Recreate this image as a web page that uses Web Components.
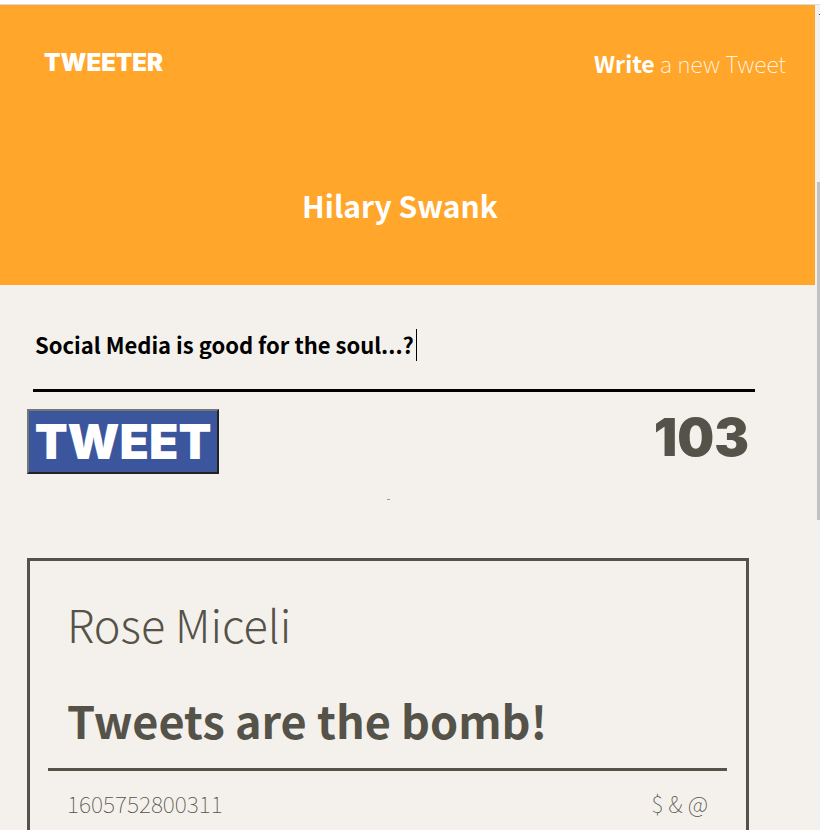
<!DOCTYPE html>
<html lang="en">
<head>
<meta charset="utf-8">
<meta name="viewport" content="width=device-width, initial-scale=1">
<title>Tweeter</title>
<style>
  body {
    margin: 0;
    --ink: #555249;
    --paper: #f4f1ec;
    --orange: #ffa62b;
    --display: Inter, "Liberation Sans", sans-serif;
    font-family: "Noto Sans CJK JP", "Noto Sans CJK SC", "Open Sans", sans-serif;
    color: var(--ink);
    background: var(--paper);
  }
</style>
</head>
<body>
<tweeter-app>
  <tweeter-header slot="header" user="Hilary Swank"></tweeter-header>
  <tweet-form value="Social Media is good for the soul...?" limit="140"></tweet-form>
  <tweet-card>
    <span slot="author">Rose Miceli</span>
    <span slot="text">Tweets are the bomb!</span>
    <span slot="time">1605752800311</span>
    <span slot="actions">$ &amp; @</span>
  </tweet-card>
</tweeter-app>
<script>
const attach = (el, html) => {
  const t = document.createElement('template');
  t.innerHTML = html;
  el.attachShadow({ mode: 'open' }).append(t.content.cloneNode(true));
  return el.shadowRoot;
};

customElements.define('tweeter-app', class extends HTMLElement {
  constructor() {
    super();
    attach(this, `
      <style>
        :host { display: flex; flex-direction: column; height: 100vh; overflow: hidden; }
        .edge { flex: none; height: 4px; background: #fff; border-bottom: 1px solid #dadbde; }
        .view { flex: 1; min-height: 0; display: grid; grid-template-columns: 1fr 5px; }
        .page { min-width: 0; overflow: hidden; }
        main { padding: 32px 66px 32px 27px; }
      </style>
      <div class="edge"></div>
      <div class="view">
        <div class="page">
          <slot name="header"></slot>
          <main><slot></slot></main>
        </div>
        <scroll-rail></scroll-rail>
      </div>`);
  }
});

customElements.define('scroll-rail', class extends HTMLElement {
  constructor() {
    super();
    attach(this, `
      <style>
        :host { display: flex; flex-direction: column; align-items: flex-end; background: #f1f1f1; }
        .arrow { width: 1px; height: 1px; margin-top: 9px; background: #505050; }
        .thumb { width: 3px; height: 338px; margin-top: 167px; background: #c1c1c1; }
      </style>
      <div class="arrow"></div>
      <div class="thumb"></div>`);
  }
});

customElements.define('tweeter-header', class extends HTMLElement {
  constructor() {
    super();
    const root = attach(this, `
      <style>
        :host { display: block; height: 280px; box-sizing: border-box; background: var(--orange); color: #fff; }
        nav { display: flex; justify-content: space-between; align-items: center; height: 115px; padding: 0 29px 0 44px; }
        a { color: inherit; text-decoration: none; }
        .logo { font: 900 24px/30px var(--display); }
        .write { font-size: 23px; line-height: 30px; font-weight: 100; }
        b { font-weight: 700; }
        h1 { margin: 63px 15px 0 0; text-align: center; font-size: 30px; line-height: 44px; font-weight: 700; }
      </style>
      <nav>
        <a class="logo" href="#">TWEETER</a>
        <a class="write" href="#compose"><b>Write</b> a new Tweet</a>
      </nav>
      <h1></h1>`);
    root.querySelector('h1').textContent = this.getAttribute('user');
  }
});

customElements.define('tweet-form', class extends HTMLElement {
  constructor() {
    super();
    const root = attach(this, `
      <style>
        :host { display: block; }
        form { display: grid; grid-template-columns: 1fr auto; align-items: start; row-gap: 17px; }
        .field { grid-column: 1 / -1; position: relative; margin: 0 -6px 0 6px; }
        input { display: block; box-sizing: border-box; width: 100%; height: 75px; padding: 0 2px 18px; border: 0; border-bottom: 3px solid #000; border-radius: 0; outline: 0; background: none; color: #000; font: inherit; font-size: 22px; font-weight: 700; caret-color: transparent; }
        .caret { position: absolute; left: 383px; top: 12px; width: 1px; height: 32px; background: #000; }
        button { justify-self: start; box-sizing: border-box; width: 192px; height: 65px; padding: 0; border: 2px solid; border-color: #767676 #222 #222 #767676; border-radius: 0; background: #3c569e; color: #fff; font: 900 48px/61px var(--display); white-space: nowrap; }
        output { font: 900 52px/58px var(--display); }
        .speck { height: 3px; display: grid; justify-content: center; margin: 25px 0 0; }
        .speck i { width: 3px; height: 1px; background: #999; }
      </style>
      <form>
        <div class="field">
          <input id="compose" type="text" aria-label="Write a new Tweet" maxlength="140">
          <span class="caret"></span>
        </div>
        <button type="button">TWEET</button>
        <output for="compose"></output>
      </form>
      <div class="speck"><i></i></div>`);
    const input = root.querySelector('input');
    const output = root.querySelector('output');
    const limit = Number(this.getAttribute('limit'));
    const update = () => { output.textContent = limit - input.value.length; };
    input.value = this.getAttribute('value');
    input.addEventListener('input', update);
    update();
  }
});

customElements.define('tweet-card', class extends HTMLElement {
  constructor() {
    super();
    attach(this, `
      <style>
        :host { display: block; margin-top: 56px; padding: 31px 19px 40px 18px; border: 3px solid var(--ink); }
        h2, p { margin: 0; padding: 0 19px; font-size: 45px; line-height: 64px; }
        h2 { font-weight: 300; }
        p { margin-top: 32px; padding-bottom: 16px; font-weight: 700; }
        footer { display: flex; justify-content: space-between; padding: 15px 19px 40px; border-top: 3px solid var(--ink); font-size: 23px; line-height: 34px; font-weight: 100; }
      </style>
      <article>
        <h2><slot name="author"></slot></h2>
        <p><slot name="text"></slot></p>
        <footer>
          <slot name="time"></slot>
          <slot name="actions"></slot>
        </footer>
      </article>`);
  }
});
</script>
</body>
</html>
